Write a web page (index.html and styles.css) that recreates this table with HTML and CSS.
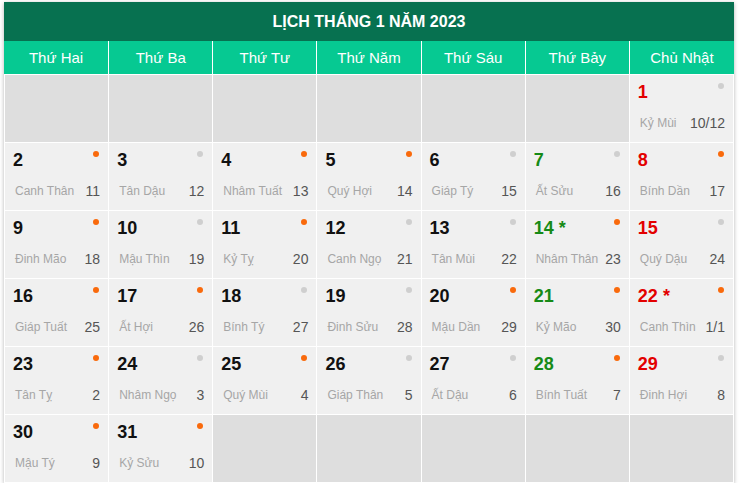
FILE: index.html
```html
<!DOCTYPE html>
<html lang="vi">
<head>
<meta charset="utf-8">
<title>Lịch tháng 1 năm 2023</title>
<link rel="stylesheet" href="styles.css">
</head>
<body>
<div class="cal">
  <div class="cal-title">LỊCH THÁNG 1 NĂM 2023</div>
  <div class="cal-week">
    <div>Thứ Hai</div><div>Thứ Ba</div><div>Thứ Tư</div><div>Thứ Năm</div><div>Thứ Sáu</div><div>Thứ Bảy</div><div>Chủ Nhật</div>
  </div>
  <div class="cal-grid">
    <div class="cell empty"></div><div class="cell empty"></div><div class="cell empty"></div><div class="cell empty"></div><div class="cell empty"></div><div class="cell empty"></div>
    <div class="cell"><span class="dot gray"></span><div class="num sun">1</div><div class="lunar"><span class="ln">Kỷ Mùi</span><span class="ld">10/12</span></div></div>

    <div class="cell"><span class="dot orange"></span><div class="num">2</div><div class="lunar"><span class="ln">Canh Thân</span><span class="ld">11</span></div></div>
    <div class="cell"><span class="dot gray"></span><div class="num">3</div><div class="lunar"><span class="ln">Tân Dậu</span><span class="ld">12</span></div></div>
    <div class="cell"><span class="dot orange"></span><div class="num">4</div><div class="lunar"><span class="ln">Nhâm Tuất</span><span class="ld">13</span></div></div>
    <div class="cell"><span class="dot orange"></span><div class="num">5</div><div class="lunar"><span class="ln">Quý Hợi</span><span class="ld">14</span></div></div>
    <div class="cell"><span class="dot gray"></span><div class="num">6</div><div class="lunar"><span class="ln">Giáp Tý</span><span class="ld">15</span></div></div>
    <div class="cell"><span class="dot gray"></span><div class="num sat">7</div><div class="lunar"><span class="ln">Ất Sửu</span><span class="ld">16</span></div></div>
    <div class="cell"><span class="dot orange"></span><div class="num sun">8</div><div class="lunar"><span class="ln">Bính Dần</span><span class="ld">17</span></div></div>

    <div class="cell"><span class="dot orange"></span><div class="num">9</div><div class="lunar"><span class="ln">Đinh Mão</span><span class="ld">18</span></div></div>
    <div class="cell"><span class="dot gray"></span><div class="num">10</div><div class="lunar"><span class="ln">Mậu Thìn</span><span class="ld">19</span></div></div>
    <div class="cell"><span class="dot orange"></span><div class="num">11</div><div class="lunar"><span class="ln">Kỷ Tỵ</span><span class="ld">20</span></div></div>
    <div class="cell"><span class="dot gray"></span><div class="num">12</div><div class="lunar"><span class="ln">Canh Ngọ</span><span class="ld">21</span></div></div>
    <div class="cell"><span class="dot gray"></span><div class="num">13</div><div class="lunar"><span class="ln">Tân Mùi</span><span class="ld">22</span></div></div>
    <div class="cell"><span class="dot orange"></span><div class="num sat">14 <span class="star">*</span></div><div class="lunar"><span class="ln">Nhâm Thân</span><span class="ld">23</span></div></div>
    <div class="cell"><span class="dot gray"></span><div class="num sun">15</div><div class="lunar"><span class="ln">Quý Dậu</span><span class="ld">24</span></div></div>

    <div class="cell"><span class="dot orange"></span><div class="num">16</div><div class="lunar"><span class="ln">Giáp Tuất</span><span class="ld">25</span></div></div>
    <div class="cell"><span class="dot orange"></span><div class="num">17</div><div class="lunar"><span class="ln">Ất Hợi</span><span class="ld">26</span></div></div>
    <div class="cell"><span class="dot gray"></span><div class="num">18</div><div class="lunar"><span class="ln">Bính Tý</span><span class="ld">27</span></div></div>
    <div class="cell"><span class="dot gray"></span><div class="num">19</div><div class="lunar"><span class="ln">Đinh Sửu</span><span class="ld">28</span></div></div>
    <div class="cell"><span class="dot orange"></span><div class="num">20</div><div class="lunar"><span class="ln">Mậu Dần</span><span class="ld">29</span></div></div>
    <div class="cell"><span class="dot orange"></span><div class="num sat">21</div><div class="lunar"><span class="ln">Kỷ Mão</span><span class="ld">30</span></div></div>
    <div class="cell"><span class="dot orange"></span><div class="num sun">22 <span class="star">*</span></div><div class="lunar"><span class="ln">Canh Thìn</span><span class="ld">1/1</span></div></div>

    <div class="cell"><span class="dot orange"></span><div class="num">23</div><div class="lunar"><span class="ln">Tân Tỵ</span><span class="ld">2</span></div></div>
    <div class="cell"><span class="dot gray"></span><div class="num">24</div><div class="lunar"><span class="ln">Nhâm Ngọ</span><span class="ld">3</span></div></div>
    <div class="cell"><span class="dot orange"></span><div class="num">25</div><div class="lunar"><span class="ln">Quý Mùi</span><span class="ld">4</span></div></div>
    <div class="cell"><span class="dot gray"></span><div class="num">26</div><div class="lunar"><span class="ln">Giáp Thân</span><span class="ld">5</span></div></div>
    <div class="cell"><span class="dot gray"></span><div class="num">27</div><div class="lunar"><span class="ln">Ất Dậu</span><span class="ld">6</span></div></div>
    <div class="cell"><span class="dot orange"></span><div class="num sat">28</div><div class="lunar"><span class="ln">Bính Tuất</span><span class="ld">7</span></div></div>
    <div class="cell"><span class="dot gray"></span><div class="num sun">29</div><div class="lunar"><span class="ln">Đinh Hợi</span><span class="ld">8</span></div></div>

    <div class="cell"><span class="dot orange"></span><div class="num">30</div><div class="lunar"><span class="ln">Mậu Tý</span><span class="ld">9</span></div></div>
    <div class="cell"><span class="dot orange"></span><div class="num">31</div><div class="lunar"><span class="ln">Kỷ Sửu</span><span class="ld">10</span></div></div>
    <div class="cell empty"></div><div class="cell empty"></div><div class="cell empty"></div><div class="cell empty"></div><div class="cell empty"></div>
  </div>
</div>
</body>
</html>
```
FILE: styles.css
```css
html, body {
  margin: 0;
  padding: 0;
  background: #ffffff;
}
body {
  font-family: "Liberation Sans", Arial, sans-serif;
}
.cal {
  width: 730px;
  margin: 2px 0 0 4px;
  background: #ffffff;
  box-shadow: 0 1px 4px rgba(0, 0, 0, 0.3);
}
.cal-title {
  height: 39px;
  background: #077150;
  color: #ffffff;
  font-weight: bold;
  font-size: 16px;
  display: flex;
  align-items: center;
  justify-content: center;
}
.cal-week {
  display: grid;
  grid-template-columns: repeat(7, 1fr);
  column-gap: 1px;
  padding: 0 1px;
  background: #ffffff;
}
.cal-week div {
  height: 33px;
  background: #06c992;
  color: #ffffff;
  font-size: 15px;
  display: flex;
  align-items: center;
  justify-content: center;
}
.cal-week div:first-child { margin-left: -1px; }
.cal-week div:last-child { margin-right: -1px; }
.cal-grid {
  display: grid;
  grid-template-columns: repeat(7, 1fr);
  grid-auto-rows: 67px;
  gap: 1px;
  padding: 1px;
  background: #ffffff;
}
.cell {
  position: relative;
  background: #f0f0f0;
  display: flex;
  flex-direction: column;
  padding: 7px 8px 0 8px;
}
.cell.empty {
  background: #dedede;
}
.num {
  font-size: 18px;
  font-weight: bold;
  color: #111111;
  line-height: 20px;
}
.num.sun { color: #e30000; }
.num.sat { color: #168a16; }
.star {
  font-size: 18px;
}
.dot {
  position: absolute;
  top: 8px;
  right: 9px;
  width: 6px;
  height: 6px;
  border-radius: 50%;
}
.dot.orange { background: #f96a0c; }
.dot.gray { background: #cfcfcf; }
.lunar {
  display: flex;
  justify-content: space-between;
  align-items: center;
  margin-top: 13px;
  padding-left: 2px;
}
.ln {
  font-size: 12px;
  color: #a6a6a6;
}
.ld {
  font-size: 14px;
  color: #555555;
}
```
